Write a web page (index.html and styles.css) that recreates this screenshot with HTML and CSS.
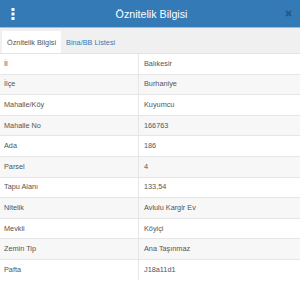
FILE: index.html
```html
<!DOCTYPE html>
<html lang="tr">

<head>
    <meta charset="UTF-8" />
    <meta name="viewport" content="width=device-width, initial-scale=1.0" />
    <title>Öznitelik Bilgisi</title>
    <link rel="stylesheet" href="styles.css">
</head>

<body>
    <div class="panel">
        <div class="panel-header">
            <span class="menu-button">
                <svg width="4" height="12" viewBox="0 0 4 12">
                    <rect x="0.5" y="0" width="3" height="3" fill="#fff" />
                    <rect x="0.5" y="4.5" width="3" height="3" fill="#fff" />
                    <rect x="0.5" y="9" width="3" height="3" fill="#fff" />
                </svg>
            </span>
            <h1>Öznitelik Bilgisi</h1>
            <span class="close-button">
                <svg width="7" height="7" viewBox="0 0 7 7">
                    <path d="M1 1 L6 6 M6 1 L1 6" stroke="#235a8c" stroke-width="2" />
                </svg>
            </span>
        </div>

        <ul class="tabs">
            <li class="tab active">Öznitelik Bilgisi</li>
            <li class="tab">Bina/BB Listesi</li>
        </ul>

        <table class="info-table">
            <tr><td>İl</td><td>Balıkesir</td></tr>
            <tr><td>İlçe</td><td>Burhaniye</td></tr>
            <tr><td>Mahalle/Köy</td><td>Kuyumcu</td></tr>
            <tr><td>Mahalle No</td><td>166763</td></tr>
            <tr><td>Ada</td><td>186</td></tr>
            <tr><td>Parsel</td><td>4</td></tr>
            <tr><td>Tapu Alanı</td><td>133,54</td></tr>
            <tr><td>Nitelik</td><td>Avlulu Kargir Ev</td></tr>
            <tr><td>Mevkii</td><td>Köyiçi</td></tr>
            <tr><td>Zemin Tip</td><td>Ana Taşınmaz</td></tr>
            <tr><td>Pafta</td><td>J18a11d1</td></tr>
        </table>
    </div>
</body>

</html>
```

FILE: styles.css
```css
body {
    margin: 0;
    font-family: "Liberation Sans", Arial, sans-serif;
    background-color: #fff;
    overflow: hidden;
}

.panel {
    width: 300px;
}

.panel-header {
    height: 28px;
    background-color: #337ab7;
    border-bottom: 1px solid #9dbcd8;
    display: flex;
    align-items: center;
    justify-content: space-between;
    padding: 0 8px 0 11px;
    box-sizing: border-box;
}

.panel-header h1 {
    margin: 0;
    font-size: 10.7px;
    font-weight: normal;
    color: #fff;
}

.menu-button {
    display: flex;
    width: 10px;
}

.close-button {
    display: flex;
    justify-content: flex-end;
    width: 10px;
}

.tabs {
    list-style: none;
    margin: 0;
    padding: 3px 0 0 2px;
    height: 26px;
    box-sizing: border-box;
    display: flex;
    background-color: #f0f0f0;
    border-bottom: 1px solid #e4e4e4;
}

.tab {
    padding: 0 5px;
    font-size: 7.3px;
    line-height: 23px;
    color: #337ab7;
}

.tab.active {
    background-color: #fff;
    color: #555;
}

.info-table {
    width: 100%;
    border-collapse: collapse;
    font-size: 7.3px;
    color: #555;
}

.info-table td {
    padding: 4.8px 4px;
    line-height: 10px;
    border-top: 1px solid #e6e6e6;
}

.info-table tr:first-child td {
    border-top: none;
}

.info-table td:first-child {
    width: 130px;
    border-right: 1px solid #e6e6e6;
}

.info-table td:last-child {
    padding-left: 5px;
}

.info-table tr:nth-child(even) {
    background-color: #f7f7f7;
}
```
